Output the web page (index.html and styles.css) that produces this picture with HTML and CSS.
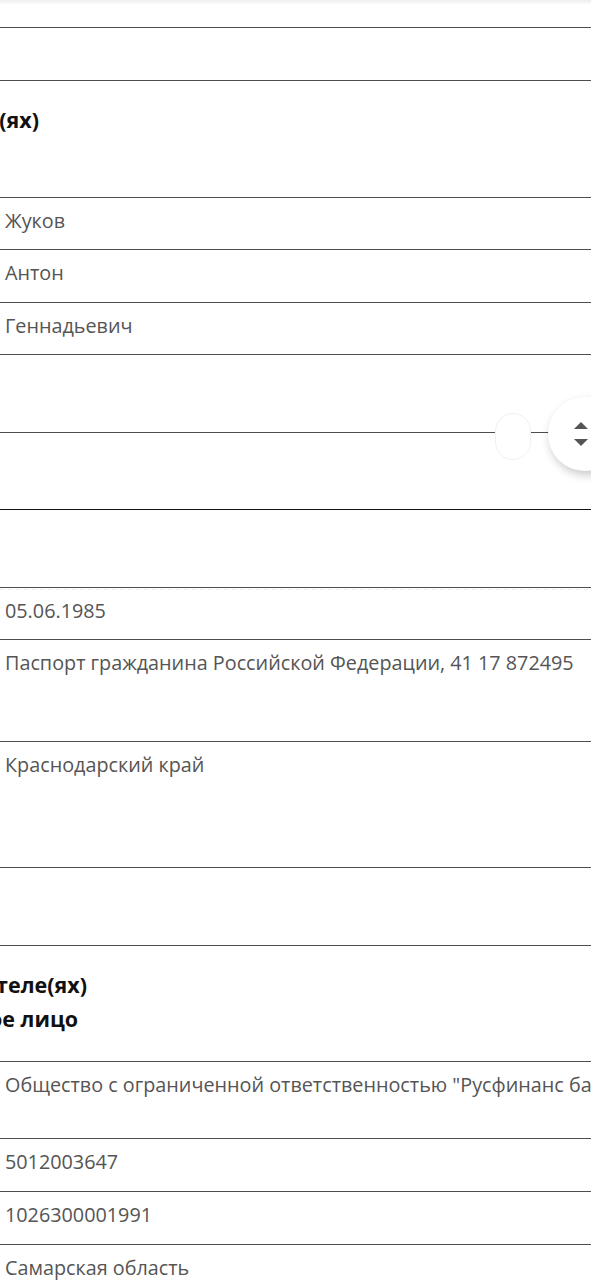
FILE: index.html
```html
<!DOCTYPE html>
<html lang="ru">
<head>
<meta charset="utf-8">
<title>Сведения</title>
<link rel="stylesheet" href="styles.css">
</head>
<body>
<div class="page">
  <div class="row r28 top"></div>
  <div class="row r53"></div>
  <div class="row r117 head">
    <div class="clip w38"><span class="htext">Сведения о залогодателе(ях)</span></div>
  </div>
  <div class="row r52"><div class="val">Жуков</div></div>
  <div class="row r53"><div class="val">Антон</div></div>
  <div class="row r52"><div class="val">Геннадьевич</div></div>
  <div class="row r78"></div>
  <div class="row r77 dark"></div>
  <div class="row r78"></div>
  <div class="row r52 dashed"><div class="val">05.06.1985</div></div>
  <div class="row r102"><div class="val">Паспорт гражданина Российской Федерации, 41 17 872495</div></div>
  <div class="row r126"><div class="val">Краснодарский край</div></div>
  <div class="row r78"></div>
  <div class="row r116 head">
    <div class="clip w86"><span class="htext">Сведения о залогодержателе(ях)</span></div>
    <div class="clip w78"><span class="htext">Юридическое лицо</span></div>
  </div>
  <div class="row r77"><div class="val nowrap">Общество с ограниченной ответственностью "Русфинанс банк"</div></div>
  <div class="row r53"><div class="val">5012003647</div></div>
  <div class="row r53"><div class="val">1026300001991</div></div>
  <div class="row last"><div class="val">Самарская область</div></div>

  <div class="thumb"></div>
  <div class="scroller">
    <svg class="arrows" width="16" height="30" viewBox="0 0 16 30" aria-hidden="true">
      <path d="M8 3 L15 10 L1 10 Z" fill="#555"/>
      <path d="M1 20 L15 20 L8 27 Z" fill="#555"/>
    </svg>
  </div>
</div>
</body>
</html>
```
FILE: styles.css
```css
* { box-sizing: border-box; }
html, body { margin: 0; padding: 0; background: #fff; overflow: hidden; }
body { font-family: "Open Sans", "Noto Sans", sans-serif; color: #555; width: 591px; height: 1280px; }
.page { position: relative; width: 591px; }
.row { border-bottom: 1px solid #4d4d4d; overflow: visible; }
.row.dark { border-bottom-color: #111; }
.top { background: linear-gradient(#efefef 0, #f6f6f6 3px, #fff 4px); }
.r28 { height: 28px; }
.r52 { height: 52px; }
.r53 { height: 53px; }
.r77 { height: 77px; }
.r78 { height: 78px; }
.r102 { height: 102px; }
.r116 { height: 116px; }
.r117 { height: 117px; }
.r126 { height: 126px; }
.last { border-bottom: none; height: 36px; }
.dashed { background: linear-gradient(90deg, #ececec 50%, transparent 50%) 0 1px / 8px 1px repeat-x; }
.val { padding: 10px 0 0 5px; font-size: 19.8px; line-height: 26px; color: #555; }
.nowrap { white-space: nowrap; }
.head { padding-top: 22px; }
.r116.head { padding-top: 22px; }
.clip { display: flex; justify-content: flex-end; white-space: nowrap; }
.w38 { width: 39px; }
.w86 { width: 87px; }
.w78 { width: 78px; }
.htext { font-size: 21.5px; font-weight: 700; line-height: 34px; color: #111; }
.thumb { position: absolute; left: 495px; top: 413px; width: 36px; height: 47px; border-radius: 18px; background: #fff; border: 1px solid #f0f0f0; }
.scroller { position: absolute; left: 548px; top: 397px; width: 74px; height: 74px; border-radius: 50%; background: #fff; box-shadow: 2px 4px 10px rgba(0,0,0,0.22); display: flex; align-items: center; padding-left: 25px; }
.arrows { display: block; }
```
